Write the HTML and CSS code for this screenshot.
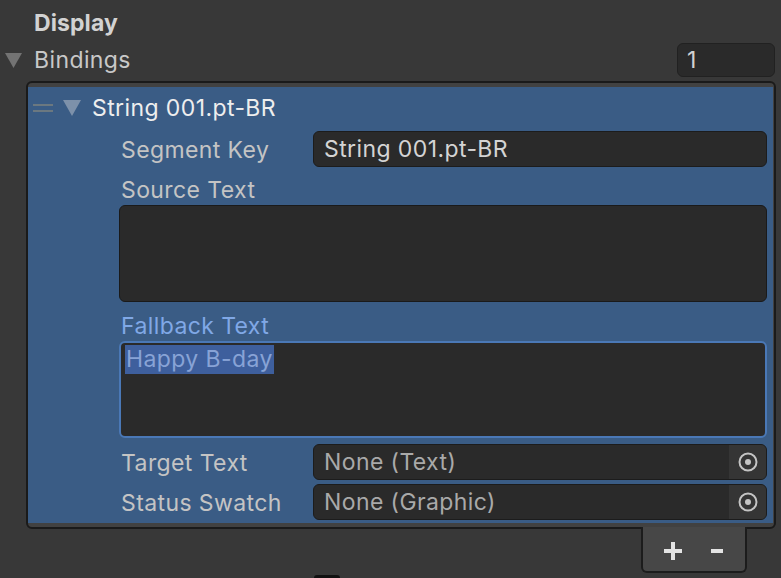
FILE: index.html
```html
<!DOCTYPE html>
<html lang="en">
<head>
    <meta charset="UTF-8">
    <title>Inspector</title>
    <link rel="stylesheet" href="styles.css">
</head>
<body>
    <div class="inspector">
        <div class="section-title">Display</div>

        <div class="bindings-row">
            <svg class="foldout" width="17" height="15" viewBox="0 0 17 15"><path d="M0 0H17L8.5 15Z"/></svg>
            <span class="bindings-label">Bindings</span>
            <div class="count-field">1</div>
        </div>

        <div class="list-box">
            <div class="list-item">
                <div class="item-header">
                    <span class="handle"><i></i><i></i></span>
                    <svg class="item-fold" width="18" height="16" viewBox="0 0 18 16"><path d="M0 0H18L9 16Z"/></svg>
                    <span class="item-title">String 001.pt-BR</span>
                </div>

                <div class="prop-row">
                    <label class="prop-label">Segment Key</label>
                    <div class="field">String 001.pt-BR</div>
                </div>

                <div class="prop-label block-label">Source Text</div>
                <div class="text-area"></div>

                <div class="prop-label block-label focused">Fallback Text</div>
                <div class="text-area active"><span class="selection">Happy B-day</span></div>

                <div class="prop-row">
                    <label class="prop-label">Target Text</label>
                    <div class="field object-field">
                        <span class="none">None (Text)</span>
                        <span class="picker"><svg width="20" height="20" viewBox="0 0 20 20"><circle cx="10" cy="10" r="8.5"/><circle class="dot" cx="10" cy="10" r="3"/></svg></span>
                    </div>
                </div>
                <div class="prop-row">
                    <label class="prop-label">Status Swatch</label>
                    <div class="field object-field">
                        <span class="none">None (Graphic)</span>
                        <span class="picker"><svg width="20" height="20" viewBox="0 0 20 20"><circle cx="10" cy="10" r="8.5"/><circle class="dot" cx="10" cy="10" r="3"/></svg></span>
                    </div>
                </div>
            </div>
        </div>

        <div class="footer-row">
            <div class="add-remove">
                <span class="btn plus" title="+"></span>
                <span class="btn minus" title="-"></span>
            </div>
        </div>
        <div class="next-stub"></div>
    </div>
</body>
</html>
```

FILE: styles.css
```css
*{
    margin: 0;
    padding: 0;
    box-sizing: border-box;
}
html, body{
    width: 781px;
    height: 578px;
    overflow: hidden;
}
body{
    background-color: #383838;
    font-family: Inter, "Noto Sans", sans-serif;
    font-size: 23px;
    letter-spacing: 0.4px;
    color: #c4c4c4;
}
.inspector{
    display: flex;
    flex-direction: column;
}
.section-title{
    height: 42px;
    padding: 9px 0 0 34px;
    line-height: 28px;
    font-weight: bold;
    letter-spacing: 0.1px;
    color: #d2d2d2;
}
.bindings-row{
    display: flex;
    align-items: center;
    height: 36px;
    padding-right: 6px;
}
.foldout{
    fill: #737373;
    margin: 0 12px 0 5px;
}
.bindings-label{
    flex: 1;
    color: #c8c8c8;
}
.count-field{
    width: 98px;
    height: 34px;
    padding-left: 9px;
    line-height: 32px;
    background-color: #2a2a2a;
    border: 1px solid #212121;
    border-radius: 6px;
    color: #d2d2d2;
}
.list-box{
    margin: 3px 5px 0 26px;
    background-color: #414141;
    border: 2px solid #1a1a1a;
    border-radius: 6px;
    padding: 4px 1px 4px 0;
}
.list-item{
    background-color: #3a5c85;
    padding: 0 6px 1px 91px;
    display: flex;
    flex-direction: column;
}
.item-header{
    display: flex;
    align-items: center;
    height: 42px;
    margin-left: -91px;
}
.handle{
    display: flex;
    flex-direction: column;
    gap: 4px;
    width: 20px;
    margin: 0 10px 0 5px;
}
.handle i{
    display: block;
    height: 2px;
    background-color: #6b7880;
}
.item-fold{
    fill: #7d91aa;
    margin-right: 11px;
}
.item-title{
    color: #eeeeee;
}
.prop-row{
    display: grid;
    grid-template-columns: 194px 1fr;
    align-items: center;
    height: 40px;
}
.prop-label{
    padding: 2px 0 0 2px;
    color: #c4c4c4;
}
.block-label{
    height: 36px;
    padding-top: 6px;
    line-height: 30px;
}
.block-label.focused{
    height: 39px;
    padding-top: 9px;
    color: #80a8e6;
}
.field{
    height: 36px;
    padding: 1px 0 0 10px;
    line-height: 33px;
    background-color: #2a2a2a;
    border: 1px solid #1c1c1c;
    border-radius: 6px;
    color: #d4d4d4;
    white-space: nowrap;
}
.object-field{
    display: flex;
    padding: 0;
    line-height: 34px;
    overflow: hidden;
}
.none{
    flex: 1;
    padding-left: 10px;
    color: #a9a9a9;
}
.picker{
    width: 37px;
    display: flex;
    align-items: center;
    justify-content: center;
    background-color: #353535;
}
.picker circle{
    fill: none;
    stroke: #c4c4c4;
    stroke-width: 2;
}
.picker .dot{
    fill: #c4c4c4;
    stroke: none;
}
.text-area{
    height: 97px;
    background-color: #2a2a2a;
    border: 1px solid #1a1a1a;
    border-radius: 6px;
    padding: 3px 5px;
}
.text-area.active{
    border: 2px solid #4a78b6;
    padding: 2px 4px;
    margin-bottom: 4px;
}
.selection{
    display: inline-block;
    height: 29px;
    line-height: 29px;
    padding: 0 1px;
    background-color: #3e5f9d;
    color: #88a3d6;
}
.footer-row{
    display: flex;
    justify-content: flex-end;
    padding-right: 34px;
    margin-top: -2px;
}
.add-remove{
    width: 106px;
    height: 46px;
    display: flex;
    align-items: center;
    justify-content: center;
    gap: 29px;
    padding: 3px 2px 0 0;
    background-color: #474747;
    border: 2px solid #1c1c1c;
    border-top: none;
    border-radius: 0 0 6px 6px;
}
/* plus / minus drawn as bars */
.btn{
    position: relative;
    display: block;
    height: 18px;
}
.plus{
    width: 18px;
}
.plus::before,
.plus::after{
    content: "";
    position: absolute;
    background-color: #e4e4e4;
}
.plus::before{
    left: 0;
    top: 7px;
    width: 18px;
    height: 4px;
}
.plus::after{
    left: 7px;
    top: 0;
    width: 4px;
    height: 18px;
}
.minus{
    width: 12px;
}
.minus::before{
    content: "";
    position: absolute;
    left: 0;
    top: 7px;
    width: 12px;
    height: 4px;
    background-color: #e4e4e4;
}
.next-stub{
    width: 26px;
    height: 4px;
    margin: 2px 0 0 314px;
    background-color: #111;
    border-radius: 3px 3px 0 0;
}
```
